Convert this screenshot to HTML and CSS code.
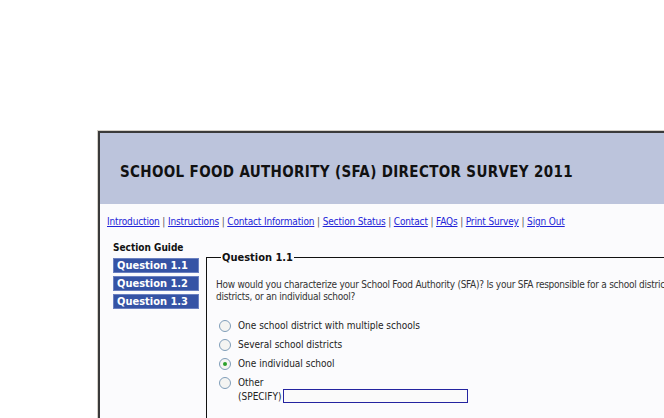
FILE: index.html
```html
<!DOCTYPE html>
<html lang="en">
<head>
    <meta charset="UTF-8">
    <title>SFA Director Survey 2011</title>
    <link rel="stylesheet" href="styles.css">
</head>
<body>
<div class="page">
    <div class="frame">
        <div class="inner">
            <div class="banner">
                <h1>SCHOOL FOOD AUTHORITY (SFA) DIRECTOR SURVEY 2011</h1>
            </div>
            <div class="nav">
                <a href="#">Introduction</a> | <a href="#">Instructions</a> | <a href="#">Contact Information</a> |
                <a href="#">Section Status</a> | <a href="#">Contact</a> | <a href="#">FAQs</a> |
                <a href="#">Print Survey</a> | <a href="#">Sign Out</a>
            </div>
            <div class="main">
                <div class="guide">
                    <div class="guide-title">Section Guide</div>
                    <a class="qbtn" href="#">Question 1.1</a>
                    <a class="qbtn" href="#">Question 1.2</a>
                    <a class="qbtn" href="#">Question 1.3</a>
                </div>
                <fieldset class="question">
                    <legend>Question 1.1</legend>
                    <p class="qtext">How would you characterize your School Food Authority (SFA)? Is your SFA responsible for a school district with multiple schools, several school districts, or an individual school?</p>
                    <ul class="options">
                        <li><label><input type="radio" name="q11"> One school district with multiple schools</label></li>
                        <li><label><input type="radio" name="q11"> Several school districts</label></li>
                        <li><label><input type="radio" name="q11" checked> One individual school</label></li>
                        <li>
                            <label><input type="radio" name="q11"> Other</label>
                            <div class="specify">(SPECIFY) <input type="text" class="specify-box"></div>
                        </li>
                    </ul>
                </fieldset>
            </div>
        </div>
    </div>
</div>
</body>
</html>
```

FILE: styles.css
```css
html {
    overflow: hidden;
}

body {
    margin: 0;
    background-color: #fff;
    font-family: "DejaVu Sans Condensed", "DejaVu Sans", sans-serif;
    font-size: 10px;
    color: #222;
}

.page {
    padding: 130px 0 0 97px;
}

.frame {
    width: 900px;
    border-top: 1px solid #d4d0c8;
    border-left: 1px solid #d4d0c8;
}

.inner {
    border-top: 2px solid #3a3a3a;
    border-left: 2px solid #3a3a3a;
    background-color: #fbfbfd;
    height: 400px;
}

.banner {
    background-color: #bcc4dc;
    height: 71px;
    display: flex;
    align-items: center;
    padding: 6px 0 0 20px;
    box-sizing: border-box;
}

.banner h1 {
    margin: 0;
    font-size: 15px;
    font-weight: bold;
    color: #111;
    letter-spacing: 0.35px;
}

.nav {
    padding: 11px 0 0 7px;
    color: #555;
    line-height: 13px;
    letter-spacing: -0.15px;
}

.nav a {
    color: #2323d8;
}

.main {
    display: flex;
    align-items: flex-start;
    padding: 14px 0 0 13px;
}

.guide {
    width: 86px;
    display: flex;
    flex-direction: column;
    gap: 3px;
}

.guide-title {
    font-weight: bold;
    font-size: 10px;
    color: #111;
    margin-bottom: 2px;
}

.qbtn {
    display: block;
    height: 13px;
    line-height: 13px;
    padding-left: 3px;
    background-color: #3553a5;
    border: 1px solid #6a80c0;
    color: #fff;
    font-size: 11px;
    font-weight: bold;
    text-decoration: none;
}

.question {
    margin: 9px 0 0 7px;
    padding: 15px 9px 10px;
    border: none;
    border-top: 1px solid #111;
    border-left: 1px solid #111;
    width: 628px;
}

.question legend {
    font-weight: bold;
    font-size: 11px;
    color: #111;
    padding: 0 1px;
    margin-left: 5px;
}

.qtext {
    margin: 0 0 16px;
    line-height: 12px;
    color: #333;
    letter-spacing: -0.25px;
}

.options {
    list-style: none;
    margin: 0;
    padding: 0 0 0 3px;
}

.options li {
    margin-bottom: 6px;
    line-height: 13px;
}

.options label {
    display: flex;
    align-items: center;
    gap: 7px;
}

.options input[type=radio] {
    appearance: none;
    margin: 0;
    width: 12px;
    height: 12px;
    border: 1px solid #7f9db9;
    border-radius: 50%;
    background-color: #f4f4f2;
    display: grid;
    place-content: center;
}

.options input[type=radio]:checked::before {
    content: "";
    width: 4px;
    height: 4px;
    border-radius: 50%;
    background-color: #2aa02a;
}

.specify {
    padding-left: 19px;
    display: flex;
    align-items: center;
    gap: 2px;
}

.specify-box {
    width: 181px;
    height: 10px;
    margin: 0;
    padding: 1px;
    border: 1px solid #2424a0;
    background-color: #fafafa;
}
```
